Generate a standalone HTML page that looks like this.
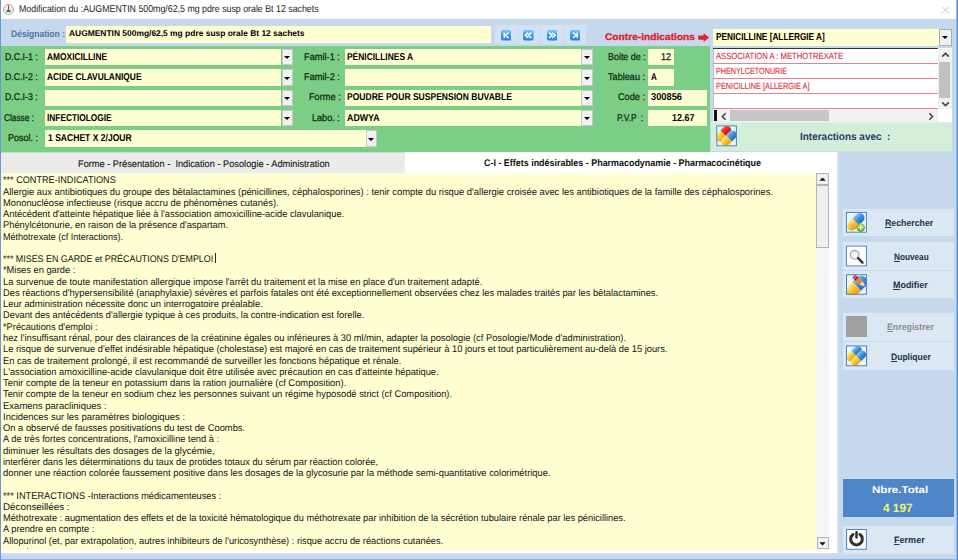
<!DOCTYPE html>
<html><head><meta charset="utf-8"><title>Modification</title>
<style>
html,body{margin:0;padding:0;}
body{width:958px;height:560px;overflow:hidden;position:relative;background:#c5d8ec;font-family:"Liberation Sans",sans-serif;text-rendering:geometricPrecision;}
.a{position:absolute;}
.t{position:absolute;white-space:pre;line-height:1.117;display:inline-block;}
.y{position:absolute;background:#ffffd4;}
.dd{position:absolute;background:#f1f1f1;border:1px solid #c9c9c9;box-sizing:border-box;}
.dd:after{content:"";position:absolute;left:50%;top:6.4px;margin:0 0 0 -3.2px;border-left:3.2px solid transparent;border-right:3.2px solid transparent;border-top:3.7px solid #000;}
.btn{position:absolute;background:#dbe7f3;}
.ic{position:absolute;box-sizing:border-box;border:1px solid #4d7fc4;background:#e9f5fd;overflow:hidden;}
</style></head><body>
<!-- title bar -->
<div class="a" style="left:0;top:0;width:958px;height:19px;background:#fff"></div>
<!-- green panel -->
<div class="a" style="left:1.3px;top:46px;width:709.2px;height:106px;background:#7ccd86"></div>
<!-- designation -->
<div class="y" style="left:66.4px;top:26.3px;width:424.6px;height:16.5px"></div>
<!-- nav buttons -->
<div class="a" style="left:495.3px;top:24.5px;width:91px;height:19.5px;background:#d3e2f2"></div>
<div class="y" style="left:44.80px;top:49.00px;width:236.70px;height:16.40px;"></div>
<div class="dd" style="left:281.50px;top:49.00px;width:11.90px;height:16.40px;"></div>
<div class="y" style="left:344.50px;top:49.00px;width:236.90px;height:16.40px;"></div>
<div class="dd" style="left:581.40px;top:49.00px;width:11.80px;height:16.40px;"></div>
<div class="y" style="left:44.80px;top:69.35px;width:236.70px;height:16.40px;"></div>
<div class="dd" style="left:281.50px;top:69.35px;width:11.90px;height:16.40px;"></div>
<div class="y" style="left:344.50px;top:69.35px;width:236.90px;height:16.40px;"></div>
<div class="dd" style="left:581.40px;top:69.35px;width:11.80px;height:16.40px;"></div>
<div class="y" style="left:44.80px;top:89.70px;width:236.70px;height:16.40px;"></div>
<div class="dd" style="left:281.50px;top:89.70px;width:11.90px;height:16.40px;"></div>
<div class="y" style="left:344.50px;top:89.70px;width:236.90px;height:16.40px;"></div>
<div class="dd" style="left:581.40px;top:89.70px;width:11.80px;height:16.40px;"></div>
<div class="y" style="left:44.80px;top:110.05px;width:236.70px;height:16.40px;"></div>
<div class="dd" style="left:281.50px;top:110.05px;width:11.90px;height:16.40px;"></div>
<div class="y" style="left:344.50px;top:110.05px;width:236.90px;height:16.40px;"></div>
<div class="dd" style="left:581.40px;top:110.05px;width:11.80px;height:16.40px;"></div>
<div class="y" style="left:44.80px;top:130.40px;width:320.90px;height:16.40px;"></div>
<div class="dd" style="left:365.70px;top:130.40px;width:11.40px;height:16.40px;"></div>
<div class="y" style="left:648.40px;top:49.00px;width:25.60px;height:16.40px;"></div>
<div class="y" style="left:648.40px;top:69.35px;width:25.60px;height:16.40px;"></div>
<div class="y" style="left:648.40px;top:89.70px;width:58.90px;height:16.40px;"></div>
<div class="y" style="left:648.40px;top:110.05px;width:58.90px;height:16.40px;"></div>
<div class="y" style="left:712.90px;top:29.00px;width:226.40px;height:16.80px;"></div>
<div class="dd" style="left:939.30px;top:29.00px;width:12.40px;height:16.80px;border-color:#adadad"></div>
<div class="a" style="left:712.90px;top:47.80px;width:239.00px;height:74.00px;background:#fff;border-left:0.7px solid #b9c3d0;box-sizing:border-box"></div>
<div class="a" style="left:712.90px;top:47.80px;width:225.50px;height:1.10px;background:#333"></div>
<div class="a" style="left:712.90px;top:62.60px;width:225.50px;height:0.80px;background:#ea8088"></div>
<div class="a" style="left:712.90px;top:77.80px;width:225.50px;height:0.80px;background:#ea8088"></div>
<div class="a" style="left:712.90px;top:92.90px;width:225.50px;height:0.80px;background:#ea8088"></div>
<div class="a" style="left:712.90px;top:107.90px;width:225.50px;height:0.80px;background:#ea8088"></div>
<div class="a" style="left:938.40px;top:48.50px;width:13.40px;height:60.00px;background:#f1f1f1"></div>
<div class="a" style="left:939.40px;top:61.70px;width:10.20px;height:36.40px;background:#c1c1c1"></div>
<div class="a" style="left:712.90px;top:109.40px;width:225.50px;height:12.20px;background:#f1f1f1"></div>
<div class="a" style="left:714.00px;top:109.60px;width:3.40px;height:11.80px;background:#111"></div>
<div class="a" style="left:730.00px;top:110.30px;width:98.50px;height:10.40px;background:#c6c6c6"></div>
<div class="a" style="left:711.00px;top:122.10px;width:241.00px;height:0.80px;background:#e4eef6"></div>
<div class="a" style="left:711.00px;top:122.80px;width:241.00px;height:27.90px;background:#d3eed8"></div>
<div class="a" style="left:1.30px;top:153.00px;width:404.00px;height:19.50px;background:#ebebeb"></div>
<div class="a" style="left:405.30px;top:152.30px;width:431.40px;height:400.40px;background:#fff"></div>
<div class="a" style="left:1.30px;top:172.50px;width:835.40px;height:380.20px;background:#fff"></div>
<div class="a" style="left:1.30px;top:172.60px;width:815.00px;height:377.80px;background:#ffffd2"></div>
<div class="a" style="left:816.20px;top:173.00px;width:12.60px;height:377.00px;background:#f6f6f6"></div>
<div class="a" style="left:816.20px;top:173.20px;width:12.60px;height:12.20px;background:#f0f0f0;border:1px solid #b5b5b5;box-sizing:border-box"></div>
<div class="a" style="left:816.20px;top:185.40px;width:12.60px;height:63.00px;background:#efefef;border:1px solid #b2b2b2;box-sizing:border-box"></div>
<div class="a" style="left:816.60px;top:537.20px;width:12.20px;height:12.00px;background:#f0f0f0;border:1px solid #b5b5b5;box-sizing:border-box"></div>
<div class="a" style="left:836.70px;top:152.30px;width:1.80px;height:400.40px;background:linear-gradient(to right,#eef4fb,#d3e2f3)"></div>
<div class="btn" style="left:842.80px;top:208.50px;width:111.30px;height:27.50px;"></div>
<div class="btn" style="left:842.80px;top:242.20px;width:111.30px;height:27.50px;"></div>
<div class="btn" style="left:842.80px;top:270.70px;width:111.30px;height:27.30px;"></div>
<div class="btn" style="left:842.80px;top:312.60px;width:111.30px;height:28.00px;"></div>
<div class="btn" style="left:842.80px;top:341.50px;width:111.30px;height:28.00px;"></div>
<div class="btn" style="left:842.80px;top:525.90px;width:111.30px;height:27.30px;"></div>
<div class="a" style="left:843.40px;top:478.50px;width:110.60px;height:38.80px;background:#4f86c8"></div>
<div class="a" style="left:0.00px;top:552.80px;width:958.00px;height:7.20px;background:linear-gradient(#dfe1ea,#cdd8e7 35%,#c1d8ef 62%,#badaf7 84%,#93b4dc 90%,#88aad6)"></div>
<div class="a" style="left:0.00px;top:0.00px;width:1.20px;height:560.00px;background:#6a98d6"></div>
<div class="a" style="left:955.50px;top:0.00px;width:2.50px;height:560.00px;background:linear-gradient(to right,#b7d1ee,#78abdf 40%,#4f8cd0 75%,#3f7bc0)"></div>
<div class="a" style="left:215.4px;top:252.5px;width:1px;height:10.5px;background:#222"></div>
<div class="a" style="left:26.6px;top:547.6px;width:1.1px;height:1.2px;background:#6b6b5a"></div>
<div class="a" style="left:121.2px;top:547.6px;width:1.1px;height:1.2px;background:#6b6b5a"></div>
<div class="a" style="left:131.2px;top:547.6px;width:1.1px;height:1.2px;background:#6b6b5a"></div>
<svg width="0" height="0" style="position:absolute"><defs>
<linearGradient id="gB" x1="0" y1="0" x2="0" y2="1"><stop offset="0" stop-color="#8cc6f4"/><stop offset=".5" stop-color="#3f8fdc"/><stop offset="1" stop-color="#2a6cb8"/></linearGradient>
<linearGradient id="gY" x1="0" y1="0" x2="0" y2="1"><stop offset="0" stop-color="#ffe88a"/><stop offset=".5" stop-color="#fcc329"/><stop offset="1" stop-color="#e89a12"/></linearGradient>
<linearGradient id="gR" x1="0" y1="0" x2="0" y2="1"><stop offset="0" stop-color="#ff5a4a"/><stop offset=".5" stop-color="#ee1c1c"/><stop offset="1" stop-color="#b80f10"/></linearGradient>
<linearGradient id="gG" x1="0" y1="0" x2="0" y2="1"><stop offset="0" stop-color="#a4d84a"/><stop offset="1" stop-color="#4f9a14"/></linearGradient>
<linearGradient id="gN" x1="0" y1="0" x2="0" y2="1"><stop offset="0" stop-color="#7cc6f6"/><stop offset=".5" stop-color="#3d9bea"/><stop offset="1" stop-color="#2a82dc"/></linearGradient>
</defs></svg>
<svg class="a" style="left:844px;top:210px" width="24" height="24" viewBox="0 0 24 24"><g transform="translate(1.90,1.90)"><rect x="0" y="0" width="21.00" height="20.80" fill="#eaf6fd"/><clipPath id="c8670"><rect width="21.00" height="20.80"/></clipPath><g clip-path="url(#c8670)"><g transform="translate(9.80,9.90) rotate(-45)"><path d="M0,-4.80 H5.70 A4.80,4.80 0 0 1 5.70,4.80 H0 Z" fill="url(#gB)"/><path d="M0,-4.80 H-5.70 A4.80,4.80 0 0 0 -5.70,4.80 H0 Z" fill="url(#gY)"/></g><circle cx="14.8" cy="15.6" r="4.3" fill="url(#gG)"/><path d="M12.2,15.6H17.4M14.8,13V18.2" stroke="#fff" stroke-width="1.5" fill="none"/></g><rect x=".5" y=".5" width="20.00" height="19.80" fill="none" stroke="#4d7fc4" stroke-width="1"/></g></svg>
<svg class="a" style="left:844px;top:244px" width="24" height="24" viewBox="0 0 24 24"><g transform="translate(1.90,1.60)"><rect x="0" y="0" width="21.00" height="20.80" fill="#fff"/><clipPath id="c8704"><rect width="21.00" height="20.80"/></clipPath><g clip-path="url(#c8704)"><circle cx="8.8" cy="9.2" r="4.3" fill="#f4f6f8" stroke="#a9adb2" stroke-width="1.4"/><path d="M12.2,12.6L16.6,17" stroke="#3a3a3a" stroke-width="2.6" stroke-linecap="round"/></g><rect x=".5" y=".5" width="20.00" height="19.80" fill="none" stroke="#4d7fc4" stroke-width="1"/></g></svg>
<svg class="a" style="left:845px;top:273px" width="24" height="24" viewBox="0 0 24 24"><g transform="translate(1.00,1.25)"><rect x="0" y="0" width="20.90" height="20.50" fill="#eaf6fd"/><clipPath id="c8734"><rect width="20.90" height="20.50"/></clipPath><g clip-path="url(#c8734)"><g transform="translate(10.60,12.00) rotate(-45)"><path d="M0,-6.20 H6.30 A6.20,6.20 0 0 1 6.30,6.20 H0 Z" fill="url(#gB)"/><path d="M0,-6.20 H-6.30 A6.20,6.20 0 0 0 -6.30,6.20 H0 Z" fill="url(#gY)"/></g><path d="M13.5,6.5L18.5,11.5" stroke="#e8f3fb" stroke-width="3" opacity=".55"/><g transform="translate(12.6,6.4) rotate(43)"><rect x="-7" y="-2.4" width="3.4" height="4.8" rx="1.6" fill="#d8489c"/><rect x="-3.8" y="-2.4" width="1.6" height="4.8" fill="#5a2a2a"/><rect x="-2.4" y="-2.4" width="6.2" height="4.8" fill="#f08424"/><path d="M3.6,-2.4L7.4,0L3.6,2.4Z" fill="#f7e2c0"/></g></g><rect x=".5" y=".5" width="19.90" height="19.50" fill="none" stroke="#4d7fc4" stroke-width="1"/></g></svg>
<svg class="a" style="left:844px;top:344px" width="25" height="24" viewBox="0 0 25 24"><g transform="translate(1.90,1.40)"><rect x="0" y="0" width="21.20" height="20.90" fill="#eaf6fd"/><clipPath id="c8804"><rect width="21.20" height="20.90"/></clipPath><g clip-path="url(#c8804)"><g transform="translate(8.00,8.00) rotate(-45)"><path d="M0,-3.90 H5.30 A3.90,3.90 0 0 1 5.30,3.90 H0 Z" fill="url(#gB)"/><path d="M0,-3.90 H-5.30 A3.90,3.90 0 0 0 -5.30,3.90 H0 Z" fill="url(#gY)"/></g><g transform="translate(12.60,12.90) rotate(-45)"><path d="M0,-3.90 H5.20 A3.90,3.90 0 0 1 5.20,3.90 H0 Z" fill="url(#gB)"/><path d="M0,-3.90 H-5.20 A3.90,3.90 0 0 0 -5.20,3.90 H0 Z" fill="url(#gY)"/></g></g><rect x=".5" y=".5" width="20.20" height="19.90" fill="none" stroke="#4d7fc4" stroke-width="1"/></g></svg>
<svg class="a" style="left:715px;top:124px" width="24" height="24" viewBox="0 0 24 24"><g transform="translate(1.30,1.40)"><rect x="0" y="0" width="20.60" height="20.90" fill="#e4f6f4"/><clipPath id="c7288"><rect width="20.60" height="20.90"/></clipPath><g clip-path="url(#c7288)"><g transform="translate(7.00,8.30) rotate(-45)"><path d="M0,-4.40 H4.85 A4.40,4.40 0 0 1 4.85,4.40 H0 Z" fill="url(#gR)"/><path d="M0,-4.40 H-4.85 A4.40,4.40 0 0 0 -4.85,4.40 H0 Z" fill="url(#gY)"/></g><g transform="translate(12.60,12.90) rotate(-45)"><path d="M0,-4.40 H4.85 A4.40,4.40 0 0 1 4.85,4.40 H0 Z" fill="url(#gB)"/><path d="M0,-4.40 H-4.85 A4.40,4.40 0 0 0 -4.85,4.40 H0 Z" fill="url(#gY)"/></g></g><rect x=".5" y=".5" width="19.60" height="19.90" fill="none" stroke="#4f86c0" stroke-width="1"/></g></svg>
<svg class="a" style="left:845px;top:528px" width="24" height="24" viewBox="0 0 24 24"><g transform="translate(1.10,1.00)"><rect x="0" y="0" width="20.80" height="20.80" fill="#fff"/><clipPath id="c8990"><rect width="20.80" height="20.80"/></clipPath><g clip-path="url(#c8990)"><path d="M6.9,5.5A5.8,5.8 0 1 0 13.9,5.5" fill="none" stroke="#303030" stroke-width="3" stroke-linecap="round"/><path d="M10.4,3.2V8.6" stroke="#303030" stroke-width="2.5" stroke-linecap="round"/></g><rect x=".5" y=".5" width="19.80" height="19.80" fill="none" stroke="#4d7fc4" stroke-width="1"/></g></svg>
<div class="a" style="left:845.7px;top:316.3px;width:21.5px;height:20.6px;background:#a0a0a0"></div>
<svg class="a" style="left:500.70px;top:30px" width="10.6" height="10.6" viewBox="0 0 10.6 10.6"><rect width="10.6" height="10.6" rx="2.6" fill="url(#gN)"/><path d="M3.3,2.6V8M7.6,2.6L4.4,5.3L7.6,8" stroke="#fff" stroke-width="1.5" fill="none" stroke-linejoin="miter"/></svg>
<svg class="a" style="left:523.10px;top:30px" width="10.6" height="10.6" viewBox="0 0 10.6 10.6"><rect width="10.6" height="10.6" rx="2.6" fill="url(#gN)"/><path d="M5.3,2.6L2.4,5.3L5.3,8M8.4,2.6L5.5,5.3L8.4,8" stroke="#fff" stroke-width="1.5" fill="none" stroke-linejoin="miter"/></svg>
<svg class="a" style="left:546.60px;top:30px" width="10.6" height="10.6" viewBox="0 0 10.6 10.6"><rect width="10.6" height="10.6" rx="2.6" fill="url(#gN)"/><path d="M2.2,2.6L5.1,5.3L2.2,8M5.3,2.6L8.2,5.3L5.3,8" stroke="#fff" stroke-width="1.5" fill="none" stroke-linejoin="miter"/></svg>
<svg class="a" style="left:569.60px;top:30px" width="10.6" height="10.6" viewBox="0 0 10.6 10.6"><rect width="10.6" height="10.6" rx="2.6" fill="url(#gN)"/><path d="M7.3,2.6V8M3,2.6L6.2,5.3L3,8" stroke="#fff" stroke-width="1.5" fill="none" stroke-linejoin="miter"/></svg>
<div class="a" style="left:517.5px;top:24.5px;width:1px;height:20px;background:#c9d9ec"></div>
<div class="a" style="left:540.3px;top:24.5px;width:1px;height:20px;background:#c9d9ec"></div>
<div class="a" style="left:563.1px;top:24.5px;width:1px;height:20px;background:#c9d9ec"></div>
<svg class="a" style="left:697px;top:32px" width="13" height="11" viewBox="0 0 13 11"><path d="M1.2,3.5H6.6V1.3L12.2,5.6L6.6,9.9V7.7H1.2Z" fill="#e0222c"/></svg>
<svg class="a" style="left:941px;top:5.5px" width="9" height="8" viewBox="0 0 9 8"><path d="M0.6,0.4L8.4,7.4M8.4,0.4L0.6,7.4" stroke="#c4c4c4" stroke-width="0.9" fill="none"/></svg>
<svg class="a" style="left:2px;top:3px" width="13" height="13" viewBox="0 0 13 13"><g transform="translate(6.5,6.5)"><circle r="4.6" fill="#eceeed"/><path d="M-4.7,1.7A5,5 0 1 1 4.7,1.7" fill="none" stroke="#e6868c" stroke-width="1"/><path d="M-4.7,1.7A5,5 0 0 0 4.7,1.7" fill="none" stroke="#8cc796" stroke-width="1"/><path d="M-0.35,-4.3H0.45V0.6H1.7V2.6H-1.7V0.6H-0.35Z" fill="#3a3a3a"/><path d="M-2.8,0.4L-1.6,2.8H1.6L2.8,0.4" fill="#8a8a8a" opacity=".5"/></g></svg>
<svg class="a" style="left:941px;top:52px" width="9" height="6" viewBox="0 0 9 6"><path d="M1.2,4.6L4.5,1.4L7.8,4.6" stroke="#404040" stroke-width="1.5" fill="none"/></svg>
<svg class="a" style="left:941px;top:100.5px" width="9" height="6" viewBox="0 0 9 6"><path d="M1.2,1.4L4.5,4.6L7.8,1.4" stroke="#404040" stroke-width="1.5" fill="none"/></svg>
<svg class="a" style="left:720.5px;top:111.5px" width="6" height="9" viewBox="0 0 6 9"><path d="M4.6,1.2L1.4,4.5L4.6,7.8" stroke="#404040" stroke-width="1.5" fill="none"/></svg>
<svg class="a" style="left:928px;top:111.5px" width="6" height="9" viewBox="0 0 6 9"><path d="M1.4,1.2L4.6,4.5L1.4,7.8" stroke="#404040" stroke-width="1.5" fill="none"/></svg>
<svg class="a" style="left:819px;top:177.2px" width="7" height="4" viewBox="0 0 7 4"><path d="M0.3,3.8L3.5,0.4L6.7,3.8Z" fill="#111"/></svg>
<svg class="a" style="left:819.2px;top:541.6px" width="7" height="4" viewBox="0 0 7 4"><path d="M0.3,0.2L3.5,3.6L6.7,0.2Z" fill="#111"/></svg>
<span class="t" style="left:18.80px;transform-origin:0 0;top:4px;font-size:10.00px;font-weight:normal;color:#1c1c1c;transform:scaleX(0.8807);">Modification du :AUGMENTIN 500mg/62,5 mg pdre susp orale Bt 12 sachets</span>
<span class="t" style="left:10.70px;transform-origin:0 0;top:30px;font-size:9.50px;font-weight:bold;color:#4a76a6;transform:scaleX(0.8974);">Désignation :</span>
<span class="t" style="left:68.60px;transform-origin:0 0;top:29px;font-size:8.40px;font-weight:bold;color:#000;transform:scaleX(1.0059);">AUGMENTIN 500mg/62,5 mg pdre susp orale Bt 12 sachets</span>
<span class="t" style="left:5.20px;transform-origin:0 0;top:53px;font-size:9.80px;font-weight:normal;color:#0c2a10;transform:scaleX(0.8990);-webkit-text-stroke:.25px #0c2a10;">D.C.I-1 :</span>
<span class="t" style="left:5.20px;transform-origin:0 0;top:73px;font-size:9.80px;font-weight:normal;color:#0c2a10;transform:scaleX(0.8990);-webkit-text-stroke:.25px #0c2a10;">D.C.I-2 :</span>
<span class="t" style="left:5.20px;transform-origin:0 0;top:93px;font-size:9.80px;font-weight:normal;color:#0c2a10;transform:scaleX(0.8990);-webkit-text-stroke:.25px #0c2a10;">D.C.I-3 :</span>
<span class="t" style="left:3.90px;transform-origin:0 0;top:114px;font-size:9.80px;font-weight:normal;color:#0c2a10;transform:scaleX(0.8449);-webkit-text-stroke:.25px #0c2a10;">Classe :</span>
<span class="t" style="left:7.50px;transform-origin:0 0;top:134px;font-size:9.80px;font-weight:normal;color:#0c2a10;transform:scaleX(0.9178);-webkit-text-stroke:.25px #0c2a10;">Posol. :</span>
<span class="t" style="left:304.30px;transform-origin:0 0;top:53px;font-size:9.80px;font-weight:normal;color:#0c2a10;transform:scaleX(0.9420);-webkit-text-stroke:.25px #0c2a10;">Famil-1 :</span>
<span class="t" style="left:304.30px;transform-origin:0 0;top:73px;font-size:9.80px;font-weight:normal;color:#0c2a10;transform:scaleX(0.9420);-webkit-text-stroke:.25px #0c2a10;">Famil-2 :</span>
<span class="t" style="left:308.50px;transform-origin:0 0;top:93px;font-size:9.80px;font-weight:normal;color:#0c2a10;transform:scaleX(0.9393);-webkit-text-stroke:.25px #0c2a10;">Forme :</span>
<span class="t" style="left:312.40px;transform-origin:0 0;top:114px;font-size:9.80px;font-weight:normal;color:#0c2a10;transform:scaleX(0.9276);-webkit-text-stroke:.25px #0c2a10;">Labo. :</span>
<span class="t" style="left:607.50px;transform-origin:0 0;top:53px;font-size:9.80px;font-weight:normal;color:#0c2a10;transform:scaleX(0.9105);-webkit-text-stroke:.25px #0c2a10;">Boite de :</span>
<span class="t" style="left:607.50px;transform-origin:0 0;top:73px;font-size:9.80px;font-weight:normal;color:#0c2a10;transform:scaleX(0.9330);-webkit-text-stroke:.25px #0c2a10;">Tableau :</span>
<span class="t" style="left:618.20px;transform-origin:0 0;top:93px;font-size:9.80px;font-weight:normal;color:#0c2a10;transform:scaleX(0.9351);-webkit-text-stroke:.25px #0c2a10;">Code :</span>
<span class="t" style="left:616.70px;transform-origin:0 0;top:114px;font-size:9.80px;font-weight:normal;color:#0c2a10;transform:scaleX(0.8551);-webkit-text-stroke:.25px #0c2a10;">P.V.P  :</span>
<span class="t" style="left:47.10px;transform-origin:0 0;top:52px;font-size:10.00px;font-weight:bold;color:#000;transform:scaleX(0.8385);">AMOXICILLINE</span>
<span class="t" style="left:47.10px;transform-origin:0 0;top:72px;font-size:10.00px;font-weight:bold;color:#000;transform:scaleX(0.8393);">ACIDE CLAVULANIQUE</span>
<span class="t" style="left:47.10px;transform-origin:0 0;top:113px;font-size:10.00px;font-weight:bold;color:#000;transform:scaleX(0.8305);">INFECTIOLOGIE</span>
<span class="t" style="left:47.60px;transform-origin:0 0;top:133px;font-size:10.00px;font-weight:bold;color:#000;transform:scaleX(0.8557);">1 SACHET X 2/JOUR</span>
<span class="t" style="left:347.20px;transform-origin:0 0;top:52px;font-size:10.00px;font-weight:bold;color:#000;transform:scaleX(0.8417);">PÉNICILLINES A</span>
<span class="t" style="left:347.20px;transform-origin:0 0;top:92px;font-size:10.00px;font-weight:bold;color:#000;transform:scaleX(0.8536);">POUDRE POUR SUSPENSION BUVABLE</span>
<span class="t" style="left:347.20px;transform-origin:0 0;top:113px;font-size:10.00px;font-weight:bold;color:#000;transform:scaleX(0.8844);">ADWYA</span>
<span class="t" style="left:660.80px;transform-origin:0 0;top:52px;font-size:9.90px;font-weight:normal;color:#1a1a1a;transform:scaleX(0.9104);-webkit-text-stroke:.25px #1a1a1a;">12</span>
<span class="t" style="left:651.00px;transform-origin:0 0;top:72px;font-size:10.00px;font-weight:bold;color:#000;transform:scaleX(0.8017);">A</span>
<span class="t" style="left:651.00px;transform-origin:0 0;top:92px;font-size:10.00px;font-weight:bold;color:#000;transform:scaleX(0.9288);">300856</span>
<span class="t" style="left:671.80px;transform-origin:0 0;top:113px;font-size:10.00px;font-weight:bold;color:#000;transform:scaleX(0.8989);">12.67</span>
<span class="t" style="left:605.00px;transform-origin:0 0;top:33px;font-size:9.60px;font-weight:bold;color:#e2202c;transform:scaleX(1.0619);-webkit-text-stroke:.3px #e2202c;">Contre-indications</span>
<span class="t" style="left:715.60px;transform-origin:0 0;top:32px;font-size:10.10px;font-weight:bold;color:#000;transform:scaleX(0.8175);">PENICILLINE [ALLERGIE A]</span>
<span class="t" style="left:715.60px;transform-origin:0 0;top:51px;font-size:9.00px;font-weight:normal;color:#de2a36;transform:scaleX(0.8519);-webkit-text-stroke:.1px #de2a36;">ASSOCIATION A : METHOTREXATE</span>
<span class="t" style="left:715.60px;transform-origin:0 0;top:66px;font-size:9.00px;font-weight:normal;color:#de2a36;transform:scaleX(0.8001);-webkit-text-stroke:.1px #de2a36;">PHENYLCETONURIE</span>
<span class="t" style="left:715.60px;transform-origin:0 0;top:81px;font-size:9.00px;font-weight:normal;color:#de2a36;transform:scaleX(0.8161);-webkit-text-stroke:.1px #de2a36;">PENICILLINE [ALLERGIE A]</span>
<span class="t" style="left:799.60px;transform-origin:0 0;top:132px;font-size:10.50px;font-weight:bold;color:#1f3a66;transform:scaleX(0.9503);">Interactions avec  :</span>
<span class="t" style="left:77.50px;transform-origin:0 0;top:160px;font-size:9.60px;font-weight:normal;color:#222;transform:scaleX(0.9613);-webkit-text-stroke:.15px #222;">Forme - Présentation -  Indication - Posologie - Administration</span>
<span class="t" style="left:484.00px;transform-origin:0 0;top:159px;font-size:9.70px;font-weight:bold;color:#111;transform:scaleX(0.9221);">C-I - Effets indésirables - Pharmacodynamie - Pharmacocinétique</span>
<span class="t" style="left:885.40px;transform-origin:0 0;top:218px;font-size:9.30px;font-weight:bold;color:#22324a;transform:scaleX(0.9419);"><u>R</u>echercher</span>
<span class="t" style="left:894.40px;transform-origin:0 0;top:252px;font-size:9.30px;font-weight:bold;color:#22324a;transform:scaleX(0.8834);"><u>N</u>ouveau</span>
<span class="t" style="left:892.50px;transform-origin:0 0;top:280px;font-size:9.30px;font-weight:bold;color:#22324a;transform:scaleX(0.9593);"><u>M</u>odifier</span>
<span class="t" style="left:887.00px;transform-origin:0 0;top:322px;font-size:9.30px;font-weight:bold;color:#8c8c8c;transform:scaleX(0.9454);"><u>E</u>nregistrer</span>
<span class="t" style="left:890.50px;transform-origin:0 0;top:352px;font-size:9.30px;font-weight:bold;color:#22324a;transform:scaleX(0.9196);"><u>D</u>upliquer</span>
<span class="t" style="left:871.90px;transform-origin:0 0;top:485px;font-size:10.00px;font-weight:bold;color:#fff;transform:scaleX(1.1536);">Nbre.Total</span>
<span class="t" style="left:882.50px;transform-origin:0 0;top:502px;font-size:12.00px;font-weight:bold;color:#f4f46a;transform:scaleX(0.9856);">4 197</span>
<span class="t" style="left:894.30px;transform-origin:0 0;top:535px;font-size:9.30px;font-weight:bold;color:#22324a;transform:scaleX(0.9736);"><u>F</u>ermer</span>
<span class="t" style="left:2.90px;transform-origin:0 0;top:176px;font-size:9.70px;font-weight:normal;color:#141414;transform:scaleX(0.9407);">*** CONTRE-INDICATIONS</span>
<span class="t" style="left:2.90px;transform-origin:0 0;top:188px;font-size:9.70px;font-weight:normal;color:#141414;transform:scaleX(0.9678);">Allergie aux antibiotiques du groupe des bêtalactamines (pénicillines, céphalosporines) : tenir compte du risque d'allergie croisée avec les antibiotiques de la famille des céphalosporines.</span>
<span class="t" style="left:2.90px;transform-origin:0 0;top:199px;font-size:9.70px;font-weight:normal;color:#141414;transform:scaleX(0.9657);">Mononucléose infectieuse (risque accru de phénomènes cutanés).</span>
<span class="t" style="left:2.90px;transform-origin:0 0;top:210px;font-size:9.70px;font-weight:normal;color:#141414;transform:scaleX(0.9601);">Antécédent d'atteinte hépatique liée à l'association amoxicilline-acide clavulanique.</span>
<span class="t" style="left:2.90px;transform-origin:0 0;top:221px;font-size:9.70px;font-weight:normal;color:#141414;transform:scaleX(0.9623);">Phénylcétonurie, en raison de la présence d'aspartam.</span>
<span class="t" style="left:2.90px;transform-origin:0 0;top:233px;font-size:9.70px;font-weight:normal;color:#141414;transform:scaleX(0.9321);">Méthotrexate (cf Interactions).</span>
<span class="t" style="left:2.90px;transform-origin:0 0;top:255px;font-size:9.70px;font-weight:normal;color:#141414;transform:scaleX(0.9176);">*** MISES EN GARDE et PRÉCAUTIONS D'EMPLOI</span>
<span class="t" style="left:2.90px;transform-origin:0 0;top:266px;font-size:9.70px;font-weight:normal;color:#141414;transform:scaleX(0.9602);">*Mises en garde :</span>
<span class="t" style="left:2.90px;transform-origin:0 0;top:278px;font-size:9.70px;font-weight:normal;color:#141414;transform:scaleX(0.9570);">La survenue de toute manifestation allergique impose l'arrêt du traitement et la mise en place d'un traitement adapté.</span>
<span class="t" style="left:2.90px;transform-origin:0 0;top:289px;font-size:9.70px;font-weight:normal;color:#141414;transform:scaleX(0.9606);">Des réactions d'hypersensibilité (anaphylaxie) sévères et parfois fatales ont été exceptionnellement observées chez les malades traités par les bêtalactamines.</span>
<span class="t" style="left:2.90px;transform-origin:0 0;top:300px;font-size:9.70px;font-weight:normal;color:#141414;transform:scaleX(0.9687);">Leur administration nécessite donc un interrogatoire préalable.</span>
<span class="t" style="left:2.90px;transform-origin:0 0;top:311px;font-size:9.70px;font-weight:normal;color:#141414;transform:scaleX(0.9592);">Devant des antécédents d'allergie typique à ces produits, la contre-indication est forelle.</span>
<span class="t" style="left:2.90px;transform-origin:0 0;top:323px;font-size:9.70px;font-weight:normal;color:#141414;transform:scaleX(0.9579);">*Précautions d'emploi :</span>
<span class="t" style="left:2.90px;transform-origin:0 0;top:334px;font-size:9.70px;font-weight:normal;color:#141414;transform:scaleX(0.9621);">hez l'insuffisant rénal, pour des clairances de la créatinine égales ou inférieures à 30 ml/min, adapter la posologie (cf Posologie/Mode d'administration).</span>
<span class="t" style="left:2.90px;transform-origin:0 0;top:345px;font-size:9.70px;font-weight:normal;color:#141414;transform:scaleX(0.9616);">Le risque de survenue d'effet indésirable hépatique (cholestase) est majoré en cas de traitement supérieur à 10 jours et tout particulièrement au-delà de 15 jours.</span>
<span class="t" style="left:2.90px;transform-origin:0 0;top:357px;font-size:9.70px;font-weight:normal;color:#141414;transform:scaleX(0.9631);">En cas de traitement prolongé, il est recommandé de surveiller les fonctions hépatique et rénale.</span>
<span class="t" style="left:2.90px;transform-origin:0 0;top:368px;font-size:9.70px;font-weight:normal;color:#141414;transform:scaleX(0.9597);">L'association amoxicilline-acide clavulanique doit être utilisée avec précaution en cas d'atteinte hépatique.</span>
<span class="t" style="left:2.90px;transform-origin:0 0;top:379px;font-size:9.70px;font-weight:normal;color:#141414;transform:scaleX(0.9688);">Tenir compte de la teneur en potassium dans la ration journalière (cf Composition).</span>
<span class="t" style="left:2.90px;transform-origin:0 0;top:390px;font-size:9.70px;font-weight:normal;color:#141414;transform:scaleX(0.9641);">Tenir compte de la teneur en sodium chez les personnes suivant un régime hyposodé strict (cf Composition).</span>
<span class="t" style="left:2.90px;transform-origin:0 0;top:402px;font-size:9.70px;font-weight:normal;color:#141414;transform:scaleX(0.9813);">Examens paracliniques :</span>
<span class="t" style="left:2.90px;transform-origin:0 0;top:413px;font-size:9.70px;font-weight:normal;color:#141414;transform:scaleX(0.9773);">Incidences sur les paramètres biologiques :</span>
<span class="t" style="left:2.90px;transform-origin:0 0;top:424px;font-size:9.70px;font-weight:normal;color:#141414;transform:scaleX(0.9671);">On a observé de fausses positivations du test de Coombs.</span>
<span class="t" style="left:2.90px;transform-origin:0 0;top:435px;font-size:9.70px;font-weight:normal;color:#141414;transform:scaleX(0.9591);">A de très fortes concentrations, l'amoxicilline tend à :</span>
<span class="t" style="left:2.90px;transform-origin:0 0;top:447px;font-size:9.70px;font-weight:normal;color:#141414;transform:scaleX(0.9774);">diminuer les résultats des dosages de la glycémie,</span>
<span class="t" style="left:2.90px;transform-origin:0 0;top:458px;font-size:9.70px;font-weight:normal;color:#141414;transform:scaleX(0.9568);">interférer dans les déterminations du taux de protides totaux du sérum par réaction colorée,</span>
<span class="t" style="left:2.90px;transform-origin:0 0;top:469px;font-size:9.70px;font-weight:normal;color:#141414;transform:scaleX(0.9666);">donner une réaction colorée faussement positive dans les dosages de la glycosurie par la méthode semi-quantitative colorimétrique.</span>
<span class="t" style="left:2.90px;transform-origin:0 0;top:492px;font-size:9.70px;font-weight:normal;color:#141414;transform:scaleX(0.9539);">*** INTERACTIONS -Interactions médicamenteuses :</span>
<span class="t" style="left:2.90px;transform-origin:0 0;top:503px;font-size:9.70px;font-weight:normal;color:#141414;transform:scaleX(1.0133);">Déconseillées :</span>
<span class="t" style="left:2.90px;transform-origin:0 0;top:514px;font-size:9.70px;font-weight:normal;color:#141414;transform:scaleX(0.9557);">Méthotrexate : augmentation des effets et de la toxicité hématologique du méthotrexate par inhibition de la sécrétion tubulaire rénale par les pénicillines.</span>
<span class="t" style="left:2.90px;transform-origin:0 0;top:525px;font-size:9.70px;font-weight:normal;color:#141414;transform:scaleX(0.9577);">A prendre en compte :</span>
<span class="t" style="left:2.90px;transform-origin:0 0;top:537px;font-size:9.70px;font-weight:normal;color:#141414;transform:scaleX(0.9568);">Allopurinol (et, par extrapolation, autres inhibiteurs de l'uricosynthèse) : risque accru de réactions cutanées.</span>
</body></html>
